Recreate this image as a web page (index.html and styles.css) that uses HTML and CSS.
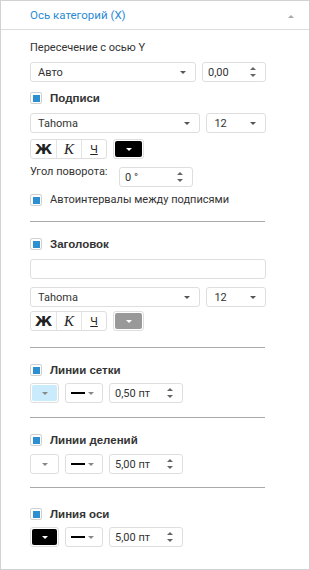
FILE: index.html
```html
<!DOCTYPE html>
<html lang="ru">
<head>
<meta charset="utf-8">
<link rel="stylesheet" href="styles.css">
</head>
<body>
<div class="panel">
  <div class="header">
    <span class="title">Ось категорий (X)</span>
    <span class="collapse"></span>
  </div>
  <div class="content">
    <div class="label m10">Пересечение с осью Y</div>
    <div class="row m6">
      <div class="select w-wide"><span>Авто</span><i class="caret"></i></div>
      <div class="spin w-num"><span>0,00</span><i class="arrows"></i></div>
    </div>
    <div class="check heading m8"><span class="box"></span>Подписи</div>
    <div class="row m7">
      <div class="select w-font"><span>Tahoma</span><i class="caret"></i></div>
      <div class="select w-size"><span>12</span><i class="caret"></i></div>
    </div>
    <div class="row m6">
      <div class="styles">
        <span class="sbtn bold">Ж</span><span class="sbtn ital">К</span><span class="sbtn under">Ч</span>
      </div>
      <div class="color wide"><span class="fill black"><i class="caret white"></i></span></div>
    </div>
    <div class="row angle m5">
      <div class="label">Угол поворота:</div>
      <div class="spin w-angle"><span>0 °</span><i class="arrows"></i></div>
    </div>
    <div class="check m5"><span class="box"></span>Автоинтервалы между подписями</div>
    <div class="sep m13"></div>

    <div class="check heading m14"><span class="box"></span>Заголовок</div>
    <div class="text-input m7"></div>
    <div class="row m8">
      <div class="select w-font"><span>Tahoma</span><i class="caret"></i></div>
      <div class="select w-size"><span>12</span><i class="caret"></i></div>
    </div>
    <div class="row m4">
      <div class="styles">
        <span class="sbtn bold">Ж</span><span class="sbtn ital">К</span><span class="sbtn under">Ч</span>
      </div>
      <div class="color wide"><span class="fill gray"><i class="caret white"></i></span></div>
    </div>
    <div class="sep m16"></div>

    <div class="check heading m14"><span class="box"></span>Линии сетки</div>
    <div class="row m5">
      <div class="color small"><span class="fill light"><i class="caret"></i></span></div>
      <div class="linestyle"><span class="line"></span><i class="caret"></i></div>
      <div class="spin w-pt"><span>0,50 пт</span><i class="arrows"></i></div>
    </div>
    <div class="sep m14"></div>

    <div class="check heading m14"><span class="box"></span>Линии делений</div>
    <div class="row m6">
      <div class="color small"><span class="fill none"><i class="caret"></i></span></div>
      <div class="linestyle"><span class="line"></span><i class="caret"></i></div>
      <div class="spin w-pt"><span>5,00 пт</span><i class="arrows"></i></div>
    </div>
    <div class="sep m13"></div>

    <div class="check heading m18"><span class="box"></span>Линия оси</div>
    <div class="row m5">
      <div class="color small"><span class="fill black"><i class="caret white"></i></span></div>
      <div class="linestyle"><span class="line"></span><i class="caret"></i></div>
      <div class="spin w-pt"><span>5,00 пт</span><i class="arrows"></i></div>
    </div>
  </div>
</div>
</body>
</html>
```
FILE: styles.css
```css
* { box-sizing: border-box; }
html, body { margin: 0; padding: 0; background: #fff; }
body {
  font-family: Roboto, "Noto Sans", sans-serif;
  font-size: 11px;
  color: #333;
}
.panel {
  width: 310px;
  height: 570px;
  border: 1px solid #d2d2d2;
  display: flex;
  flex-direction: column;
}
.header {
  height: 29px;
  border-bottom: 1px solid #dcdcdc;
  display: flex;
  align-items: center;
  justify-content: space-between;
  padding: 0 15px 0 29px;
}
.title { color: #2a8bd4; font-size: 11.5px; line-height: 16px; }
.collapse {
  width: 0; height: 0;
  border-left: 3px solid transparent;
  border-right: 3px solid transparent;
  border-bottom: 3px solid #aaa;
  margin-top: 2px;
}
.content {
  display: flex;
  flex-direction: column;
  padding: 0 43px 0 29px;
}
.m4 { margin-top: 4px; } .m5 { margin-top: 5px; } .m6 { margin-top: 6px; }
.m7 { margin-top: 7px; } .m8 { margin-top: 8px; } .m10 { margin-top: 10px; }
.m13 { margin-top: 13px; } .m14 { margin-top: 14px; } .m16 { margin-top: 16px; }
.m18 { margin-top: 18px; }

.label { line-height: 16px; height: 16px; white-space: nowrap; }
.row { display: flex; align-items: center; gap: 6px; }
.row.angle { align-items: flex-start; gap: 0; }
.row.angle .label { width: 89px; }
.row.angle .spin { margin-top: 3px; }

.select, .spin, .text-input, .linestyle, .color {
  height: 20px;
  border: 1px solid #dedede;
  border-radius: 3px;
  background: #fff;
  display: flex;
  align-items: center;
  position: relative;
}
.select { padding-left: 7px; justify-content: space-between; padding-right: 9px; }
.spin { padding-left: 5px; justify-content: space-between; padding-right: 8px; }
.w-wide { width: 166px; }
.w-num { width: 64px; }
.w-font { width: 172px; }
.w-size { width: 60px; }
.w-angle { width: 74px; }
.w-pt { width: 74px; }
.text-input { width: 236px; }

.caret {
  display: block;
  width: 0; height: 0;
  border-left: 3px solid transparent;
  border-right: 3px solid transparent;
  border-top: 3px solid #555;
}
.caret.white { border-top-color: #fff; }
.arrows {
  display: block;
  width: 7px; height: 10px;
  position: relative;
}
.arrows::before, .arrows::after {
  content: "";
  position: absolute;
  left: 0;
  width: 0; height: 0;
  border-left: 3px solid transparent;
  border-right: 3px solid transparent;
}
.arrows::before { top: 0; border-bottom: 3px solid #666; }
.arrows::after { bottom: 0; border-top: 3px solid #666; }

.check { display: flex; align-items: center; gap: 8px; line-height: 16px; height: 16px; white-space: nowrap; }
.check.heading { font-weight: bold; font-family: "Liberation Sans", Arial, sans-serif; font-size: 11.5px; color: #333; }
.box {
  width: 12px; height: 12px;
  border: 1px solid #d0d0d0;
  border-radius: 2px;
  display: flex; align-items: center; justify-content: center;
  flex: none;
}
.box::after { content: ""; width: 7px; height: 7px; background: #2b8fd2; }

.styles {
  display: flex;
  height: 20px;
  border: 1px solid #dedede;
  border-radius: 3px;
}
.sbtn {
  width: 25px;
  display: flex; align-items: center; justify-content: center;
  border-left: 1px solid #e4e4e4;
  color: #222;
  font-size: 13px;
}
.sbtn:first-child { border-left: 0; }
.sbtn.bold { font-weight: bold; font-family: "DejaVu Sans", sans-serif; font-size: 14px; }
.sbtn.ital { font-style: italic; font-family: "Liberation Serif", serif; font-size: 15px; }
.sbtn.under { text-decoration: underline; font-size: 11px; }

.color { padding: 1px; }
.color.wide { width: 31px; }
.color.small { width: 29px; }
.fill {
  flex: 1; align-self: stretch;
  border-radius: 2px;
  display: flex; align-items: center; justify-content: center;
}
.fill.black { background: #000; }
.fill.gray { background: #999; }
.fill.light { background: #c9ebfb; }
.fill.none { background: #fff; }
.fill .caret { border-top-color: #888; }
.fill.black .caret, .fill.gray .caret { border-top-color: #fff; }

.linestyle { width: 38px; padding: 0 8px 0 5px; justify-content: space-between; }
.linestyle .line { width: 14px; height: 2px; background: #000; }
.linestyle .caret { border-top-color: #888; }

.sep { height: 1px; background: #a9a9a9; width: 235px; }
```
